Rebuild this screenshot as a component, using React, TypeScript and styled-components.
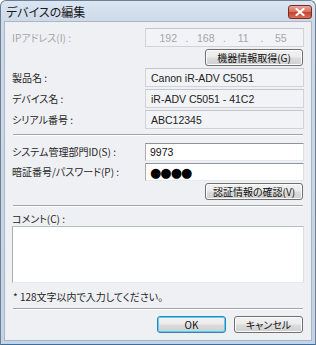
import React from 'react'
import styled, { createGlobalStyle } from 'styled-components'

const Global = createGlobalStyle`
  html, body {
    margin: 0;
    padding: 0;
    background: #ffffff;
  }
  body {
    font-family: "Noto Sans CJK JP", "Liberation Sans", sans-serif;
    font-size: 10px;
    font-weight: 400;
    font-feature-settings: "palt";
    color: #262626;
  }
`;

const WindowS = styled.div`
  width: 316px;
  height: 345px;
  box-sizing: border-box;
  display: flex;
  flex-direction: column;
  background: linear-gradient(#dbe6f3 0px, #cdd9e8 21px, #c4d3e5 100%);
  border: 1px solid #6f7f93;
  border-bottom-color: #3d6f9e;
  border-radius: 6px 6px 0 0;
  overflow: hidden;
`;

const TitleBar = styled.div`
  height: 20px;
  display: flex;
  align-items: center;
  justify-content: space-between;
  padding: 0 3px 0 5px;

  h1 {
    margin: 0;
    font-size: 12px;
    font-weight: 400;
    color: #1a1a1a;
  }
`;

const CloseButton = styled.div`
  width: 24px;
  height: 14px;
  margin-top: 2px;
  border: 1px solid #7a2b24;
  border-radius: 3px;
  background: linear-gradient(#e7a89c 0%, #d8735f 45%, #c4452d 55%, #d6705c 100%);
  display: flex;
  align-items: center;
  justify-content: center;
  box-sizing: border-box;
`;

const Client = styled.div`
  flex: 1;
  margin: 0 3px 3px;
  background: #eff0f4;
  border: 1px solid #a9b6c6;
  padding: 6px 7px 0 7px;
  display: flex;
  flex-direction: column;
`;

const Row = styled.div<{ $mt?: number }>`
  display: grid;
  grid-template-columns: 133px 159px;
  align-items: center;
  margin-top: ${(p) => p.$mt ?? 2}px;
`;

const Label = styled.span<{ $disabled?: boolean }>`
  color: ${(p) => (p.$disabled ? '#a3a6ab' : '#262626')};
  white-space: nowrap;
  line-height: 12px;
`;

const ReadOnly = styled.div<{ $grey?: boolean }>`
  height: 19px;
  box-sizing: border-box;
  border: 1px solid #d0d4da;
  border-top-color: #c3c7cd;
  background: #f2f3f6;
  padding: 0 5px;
  display: flex;
  align-items: center;
  font-family: "Liberation Sans", sans-serif;
  font-size: 10.5px;
  color: ${(p) => (p.$grey ? '#a3a6ab' : '#222')};
`;

const IpCell = styled.span`
  flex: 1;
  text-align: center;
`;

const Input = styled.div`
  height: 18px;
  box-sizing: border-box;
  border: 1px solid #abadb3;
  border-top-color: #8e9299;
  border-right-color: #dbdfe6;
  border-bottom-color: #e3e9ef;
  background: #ffffff;
  padding: 0 4px;
  display: flex;
  align-items: center;
  font-family: "Liberation Sans", sans-serif;
  font-size: 10.5px;
  color: #111;
`;

const Dots = styled.span`
  font-size: 13px;
  letter-spacing: -1px;
  font-family: "DejaVu Sans", sans-serif;
  color: #000;
`;

const ButtonRow = styled.div<{ $mt?: number }>`
  display: flex;
  justify-content: flex-end;
  gap: 8px;
  margin-top: ${(p) => p.$mt ?? 2}px;
  padding-right: 1px;
`;

const Button = styled.div<{ $w: number; $default?: boolean }>`
  width: ${(p) => p.$w}px;
  height: 17px;
  box-sizing: border-box;
  border: 1px solid ${(p) => (p.$default ? '#3c7fb1' : '#707070')};
  border-radius: 3px;
  background: linear-gradient(#f2f2f2 0%, #ebebeb 48%, #dddddd 52%, #cfcfcf 100%);
  box-shadow: inset 0 0 0 1px ${(p) => (p.$default ? '#48d7fb' : '#fcfcfc')};
  display: flex;
  align-items: center;
  justify-content: center;
  color: #111;
  line-height: 12px;
`;

const Separator = styled.div<{ $mt: number }>`
  height: 0;
  border-top: 1px solid #a0a5ac;
  border-bottom: 1px solid #ffffff;
  margin: ${(p) => p.$mt}px 1px 0 1px;
`;

const CommentLabel = styled.div`
  margin-top: 6px;
  line-height: 12px;
`;

const TextArea = styled.div`
  height: 57px;
  margin-top: 1px;
  box-sizing: border-box;
  border: 1px solid #abadb3;
  border-top-color: #b9bcc2;
  border-right-color: #dbdfe6;
  border-bottom-color: #e3e9ef;
  background: #fff;
`;

const Note = styled.div`
  margin-top: 8px;
  line-height: 12px;
  padding-left: 1px;
`;

export default function App() {
  return (
    <>
      <Global />
      <WindowS>
        <TitleBar>
          <h1>デバイスの編集</h1>
          <CloseButton>
            <svg width="10" height="8" viewBox="0 0 10 8">
              <path d="M1.5 1 L8.5 7 M8.5 1 L1.5 7" stroke="#ffffff" strokeWidth="2" strokeLinecap="square" />
            </svg>
          </CloseButton>
        </TitleBar>
        <Client>
          <Row $mt={0}>
            <Label $disabled>IPアドレス(I) :</Label>
            <ReadOnly $grey>
              <IpCell>192</IpCell>.<IpCell>168</IpCell>.<IpCell>11</IpCell>.<IpCell>55</IpCell>
            </ReadOnly>
          </Row>
          <ButtonRow>
            <Button $w={98}>機器情報取得(G)</Button>
          </ButtonRow>
          <Row>
            <Label>製品名 :</Label>
            <ReadOnly>Canon iR-ADV C5051</ReadOnly>
          </Row>
          <Row>
            <Label>デバイス名 :</Label>
            <ReadOnly>iR-ADV C5051 - 41C2</ReadOnly>
          </Row>
          <Row>
            <Label>シリアル番号 :</Label>
            <ReadOnly>ABC12345</ReadOnly>
          </Row>
          <Separator $mt={5} />
          <Row $mt={7}>
            <Label>システム管理部門ID(S) :</Label>
            <Input>9973</Input>
          </Row>
          <Row $mt={2}>
            <Label>暗証番号/パスワード(P) :</Label>
            <Input>
              <Dots>●●●●</Dots>
            </Input>
          </Row>
          <ButtonRow $mt={2}>
            <Button $w={98}>認証情報の確認(V)</Button>
          </ButtonRow>
          <Separator $mt={5} />
          <CommentLabel>コメント(C) :</CommentLabel>
          <TextArea />
          <Note>* 128文字以内で入力してください。</Note>
          <Separator $mt={5} />
          <ButtonRow $mt={6}>
            <Button $w={69} $default>OK</Button>
            <Button $w={69}>キャンセル</Button>
          </ButtonRow>
        </Client>
      </WindowS>
    </>
  )
}
